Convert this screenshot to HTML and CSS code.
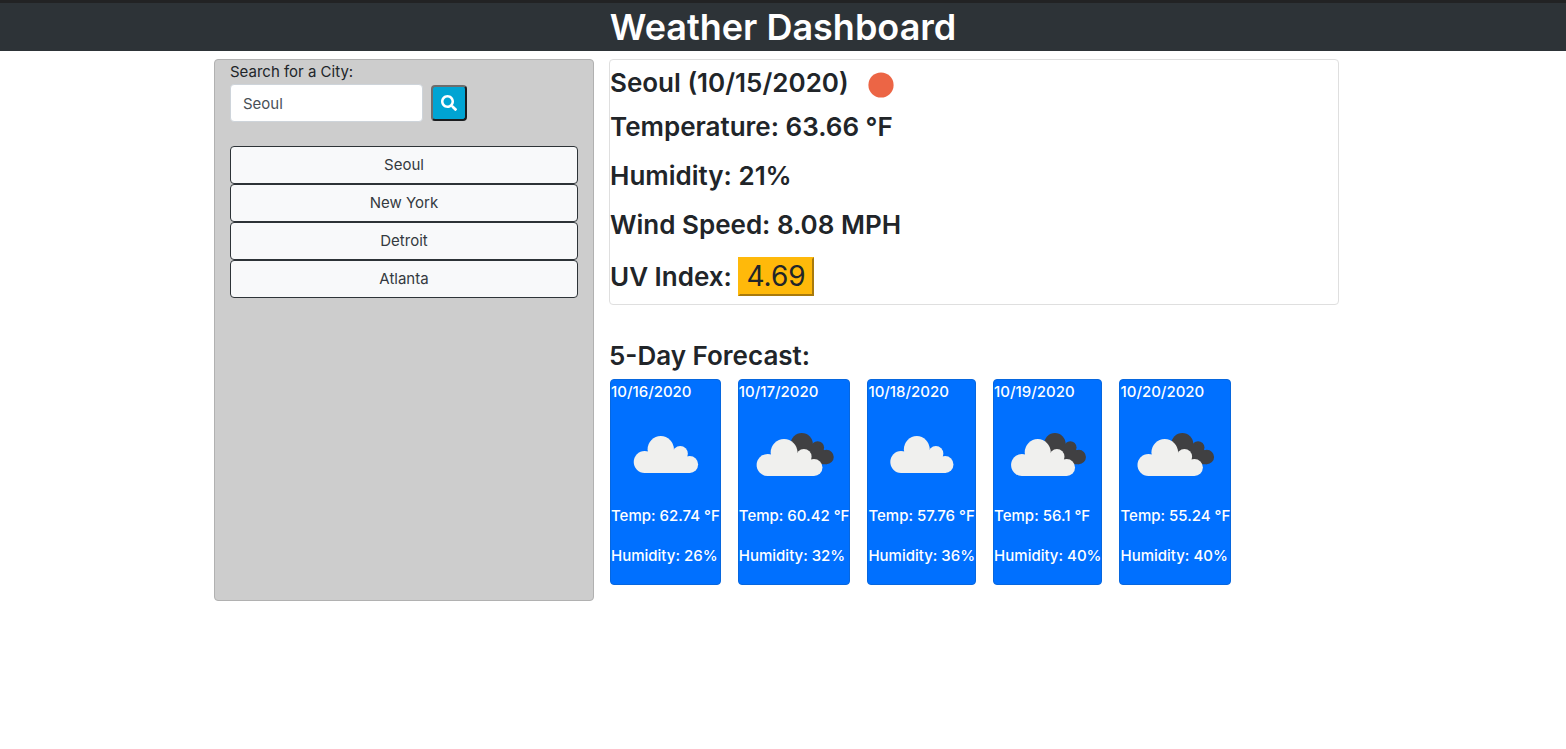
FILE: index.html
```html
<!DOCTYPE html>
<html lang="en">
<head>
<meta charset="utf-8">
<meta name="viewport" content="width=device-width, initial-scale=1">
<title>Weather Dashboard</title>
<link rel="stylesheet" href="styles.css">
</head>
<body>
<svg class="sprite" aria-hidden="true">
  <symbol id="cloud" viewBox="0 0 110 100" preserveAspectRatio="none">
    <g fill="#f0f0ee">
      <circle cx="34" cy="58" r="11"/><circle cx="50.3" cy="45.3" r="13.3"/><circle cx="70" cy="49.7" r="7.7"/><circle cx="79.6" cy="60.4" r="8.5"/>
      <path d="M34 50l10-4h20l12 8 4 6v8.9H34z"/>
    </g>
  </symbol>
  <symbol id="broken" viewBox="0 0 110 100" preserveAspectRatio="none">
    <g fill="#404042">
      <circle cx="62.4" cy="40" r="11"/><circle cx="78.2" cy="43.6" r="6.4"/><circle cx="87" cy="53" r="7.2"/>
      <path d="M62 40h14l11 8v12.2H78L62 51z"/>
    </g>
    <g fill="#f0f0ee" transform="translate(-5.5 3)">
      <circle cx="34" cy="58" r="11"/><circle cx="50.3" cy="45.3" r="13.3"/><circle cx="70" cy="49.7" r="7.7"/><circle cx="80" cy="60.4" r="8.5"/>
      <path d="M34 50l10-4h20l12 8 4 6v8.9H34z"/>
    </g>
  </symbol>
</svg>
<header class="banner"><h1>Weather Dashboard</h1></header>
<main class="container">
  <aside class="sidebar">
    <form class="search">
      <label for="city">Search for a City:</label>
      <div class="search-row">
        <input id="city" type="text" value="Seoul">
        <button type="button" class="search-btn" aria-label="Search">
          <svg width="16" height="16" viewBox="0 0 512 512" fill="#fff"><path d="M505 442.700L405.300 343c-4.500-4.500-10.600-7-17-7H372c27.600-35.300 44-79.700 44-128C416 93.100 322.900 0 208 0S0 93.100 0 208s93.100 208 208 208c48.300 0 92.700-16.400 128-44v16.300c0 6.400 2.500 12.500 7 17l99.700 99.700c9.400 9.400 24.600 9.400 33.900 0l28.300-28.300c9.400-9.400 9.400-24.600.1-34zM208 336c-70.700 0-128-57.200-128-128 0-70.700 57.200-128 128-128 70.700 0 128 57.200 128 128 0 70.700-57.200 128-128 128z"/></svg>
        </button>
      </div>
    </form>
    <div class="history">
      <button type="button">Seoul</button>
      <button type="button">New York</button>
      <button type="button">Detroit</button>
      <button type="button">Atlanta</button>
    </div>
  </aside>
  <section class="content">
    <div class="current">
      <div class="current-title">
        <h3>Seoul (10/15/2020)</h3>
        <svg width="50" height="50" viewBox="0 0 50 50" aria-hidden="true"><circle cx="25" cy="25" r="12.600" fill="#ec6545"/></svg>
      </div>
      <h3>Temperature: 63.66 °F</h3>
      <h3>Humidity: 21%</h3>
      <h3>Wind Speed: 8.08 MPH</h3>
      <h3 class="uv">UV Index: <button type="button">4.69</button></h3>
    </div>
    <h3 class="forecast-title">5-Day Forecast:</h3>
    <div class="forecast">
      <article><h4>10/16/2020</h4><svg><use href="#cloud"/></svg><p>Temp: 62.74 °F</p><p>Humidity: 26%</p></article>
      <article><h4>10/17/2020</h4><svg><use href="#broken"/></svg><p>Temp: 60.42 °F</p><p>Humidity: 32%</p></article>
      <article><h4>10/18/2020</h4><svg><use href="#cloud"/></svg><p>Temp: 57.76 °F</p><p>Humidity: 36%</p></article>
      <article><h4>10/19/2020</h4><svg><use href="#broken"/></svg><p>Temp: 56.1 °F</p><p>Humidity: 40%</p></article>
      <article><h4>10/20/2020</h4><svg><use href="#broken"/></svg><p>Temp: 55.24 °F</p><p>Humidity: 40%</p></article>
    </div>
  </section>
</main>
</body>
</html>
```
FILE: styles.css
```css
*, *::before, *::after { box-sizing: border-box; }
body {
  margin: 0;
  background: #fff;
  color: #212529;
  font: 400 15px/24px Inter, "Liberation Sans", sans-serif;
}
h1, h3, h4, p { margin: 0; }
h1, h3 { font-weight: 600; }
h4 { font-weight: 500; }
button, input { font: inherit; color: inherit; }
.sprite { display: none; }

.banner {
  background: #2d3337;
  border-top: 3px solid #222324;
  color: #fff;
  text-align: center;
}
.banner h1 { font-size: 36px; line-height: 48px; }

.container {
  display: flex;
  width: 100%;
  max-width: 1142px;
  margin: 8px auto 0;
  padding-left: 2px;
}
.sidebar {
  flex: 0 0 calc(100% / 3);
  padding: 0 15px;
  background: #cdcdcd;
  border: 1px solid #b1b1b1;
  border-radius: 4px;
}
.search label { display: block; }
.search-row { display: flex; align-items: center; gap: 8px; margin-bottom: 24px; }
.search-row input {
  width: 193px;
  height: 38px;
  padding: 6px 12px;
  color: #495057;
  background: #fff;
  border: 1px solid #ced4da;
  border-radius: 4px;
}
.search-btn {
  display: grid;
  place-items: center;
  width: 36px;
  height: 36px;
  padding: 0;
  background: #00a4d3;
  border: 2px solid;
  border-color: #6d6d6d #1b1d1f #1b1d1f #6d6d6d;
  border-radius: 4px;
}
.history { display: flex; flex-direction: column; }
.history button {
  padding: 6px 12px;
  color: #343a40;
  background: #f8f9fa;
  border: 1px solid #2d3337;
  border-radius: 4px;
}

.content { flex: 1; min-width: 0; padding: 0 15px; }
h3 { font-size: 26px; line-height: 33px; }
.current {
  display: flex;
  flex-direction: column;
  gap: 16px;
  padding-bottom: 8px;
  border: 1px solid #dfdfdf;
  border-radius: 4px;
}
.current-title { display: flex; align-items: flex-start; gap: 7px; margin-bottom: -16px; }
.current-title h3 { padding-top: 6px; }
.uv button {
  padding: 0 6px;
  font-size: 28px;
  font-weight: 400;
  line-height: 35px;
  background: #ffb90a;
  border: 2px solid #ffb90a;
  border-right-color: #a97a0c;
  border-bottom-color: #a97a0c;
}
.forecast-title { margin: 34px 0 7px; }
.forecast { display: flex; flex-wrap: wrap; gap: 17px; margin-bottom: 16px; padding-left: 1px; }
.forecast article {
  padding-bottom: 16px;
  color: #fff;
  background: #0070ff;
  border: 1px solid #0767df;
  border-radius: 4px;
  font-weight: 500;
}
.forecast h4 { font-size: 15px; }
.forecast svg { display: block; width: 0; min-width: 100%; height: 100px; }
.forecast p + p { margin-top: 16px; }

@media (max-width: 767px) {
  .container { flex-direction: column; }
  .content { padding-top: 16px; }
}
```
